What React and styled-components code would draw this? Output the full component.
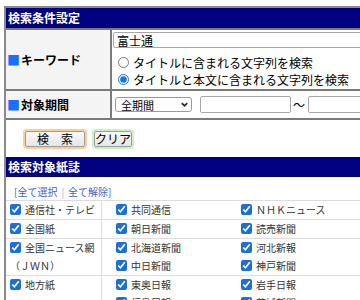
import React from 'react'
import styled, { createGlobalStyle } from 'styled-components'

const GlobalStyle = createGlobalStyle`
  html, body {
    margin: 0;
    padding: 0;
    overflow: hidden;
    background: #fff;
  }
  body {
    font-family: "Noto Sans CJK JP", "Noto Sans", sans-serif;
    color: #000;
  }
`

const categories = [
  { name: '通信社・テレビ', papers: ['共同通信', 'ＮＨＫニュース', 'テレビ朝日'] },
  { name: '全国紙', papers: ['朝日新聞', '読売新聞', '毎日新聞'] },
  {
    name: '全国ニュース網',
    sub: '（ＪＷＮ）',
    papers: ['北海道新聞', '河北新報', '東京新聞', '中日新聞', '神戸新聞', '京都新聞'],
  },
  { name: '地方紙', papers: ['東奥日報', '岩手日報', '秋田魁新報', '福島民報', '茨城新聞', '下野新聞'] },
]

const App = () => {
  return (
    <>
      <GlobalStyle />
      <Page>
        <Panel>
          <SectionHead>検索条件設定</SectionHead>
          <FormRow>
            <LabelCell>
              <Mark>■</Mark>キーワード
            </LabelCell>
            <FieldCell>
              <KeywordInput defaultValue="富士通" />
              <RadioLine>
                <Radio type="radio" name="scope" />
                タイトルに含まれる文字列を検索
              </RadioLine>
              <RadioLine>
                <Radio type="radio" name="scope" defaultChecked />
                タイトルと本文に含まれる文字列を検索
              </RadioLine>
            </FieldCell>
          </FormRow>
          <FormRow>
            <LabelCell>
              <Mark>■</Mark>対象期間
            </LabelCell>
            <FieldCell $inline>
              <SelectWrap>
                <PeriodSelect defaultValue="all">
                  <option value="all">全期間</option>
                </PeriodSelect>
                <Chevron viewBox="0 0 10 10">
                  <path d="M2 3.5 L5 6.5 L8 3.5" fill="none" stroke="#222" strokeWidth="1.8" />
                </Chevron>
              </SelectWrap>
              <DateInput $gap={8} />
              <Tilde>〜</Tilde>
              <DateInput $gap={3} />
            </FieldCell>
          </FormRow>
          <ButtonRow>
            <Button $ring="#ffcc99" $wide>検　索</Button>
            <Button $ring="#ccf0cc">クリア</Button>
          </ButtonRow>
          <SectionHead>検索対象紙誌</SectionHead>
          <LinkRow>
            [<a href="#">全て選択</a>
            <Sep>|</Sep>
            <a href="#">全て解除</a>]
          </LinkRow>
          <PaperTable>
            {categories.map((cat) => (
              <CatRow key={cat.name}>
                <CatCell>
                  <Check type="checkbox" defaultChecked />
                  {cat.name}
                  {cat.sub && (
                    <>
                      <br />
                      {cat.sub}
                    </>
                  )}
                </CatCell>
                <PaperGrid>
                  {cat.papers.map((p) => (
                    <PaperItem key={p}>
                      <Check type="checkbox" defaultChecked />
                      {p}
                    </PaperItem>
                  ))}
                </PaperGrid>
              </CatRow>
            ))}
          </PaperTable>
        </Panel>
      </Page>
    </>
  )
}

export default App

const Page = styled.div`
  padding: 6px 0 0 4px;
  width: 700px;
`

const Panel = styled.div`
  border-left: 2px solid #8a8a8a;
  border-top: 2px solid #8a8a8a;
  background: #fff;
`

const SectionHead = styled.div`
  background: #000080;
  color: #fff;
  font-size: 12px;
  font-weight: bold;
  height: 20px;
  line-height: 20px;
  padding-left: 2px;
`

const FormRow = styled.div`
  display: grid;
  grid-template-columns: 106px 1fr;
  border-top: 2px solid #7a7a7a;
`

const LabelCell = styled.div`
  background: #f4f4f4;
  border-right: 2px solid #7a7a7a;
  display: flex;
  align-items: center;
  font-size: 12px;
  font-weight: bold;
  padding-left: 1px;
`

const Mark = styled.span`
  color: #1a6fff;
  font-weight: normal;
  font-size: 13px;
  margin-right: 1px;
`

const FieldCell = styled.div`
  display: flex;
  flex-direction: ${(p) => (p.$inline ? 'row' : 'column')};
  align-items: ${(p) => (p.$inline ? 'center' : 'stretch')};
  padding: ${(p) => (p.$inline ? '5px 0 5px 3px' : '2px 0 1px 1px')};
`

const KeywordInput = styled.input`
  font-family: inherit;
  font-size: 12px;
  height: 16px;
  box-sizing: border-box;
  border: 1px solid #a8a8a8;
  border-radius: 2px;
  padding: 0 3px;
  width: 100%;
  outline: none;
`

const RadioLine = styled.label`
  display: flex;
  align-items: center;
  font-size: 12px;
  line-height: 17px;
  &:first-of-type {
    margin-top: 6px;
  }
`

const Radio = styled.input`
  width: 11px;
  height: 11px;
  margin: 0 4px 0 5px;
  accent-color: #1a73e8;
`

const SelectWrap = styled.div`
  position: relative;
  width: 77px;
  height: 15px;
`

const PeriodSelect = styled.select`
  appearance: none;
  display: block;
  width: 100%;
  height: 100%;
  box-sizing: border-box;
  border: 1px solid #9a9a9a;
  border-radius: 3px;
  background: #fff;
  font-family: inherit;
  font-size: 11px;
  padding: 0 0 0 5px;
  line-height: 12px;
  color: #000;
`

const Chevron = styled.svg`
  position: absolute;
  right: 3px;
  top: 3px;
  width: 9px;
  height: 9px;
  pointer-events: none;
`

const DateInput = styled.input`
  width: 91px;
  height: 17px;
  box-sizing: border-box;
  border: 1px solid #a8a8a8;
  border-radius: 2px;
  margin-left: ${(p) => p.$gap}px;
  outline: none;
`

const Tilde = styled.span`
  font-size: 12px;
  line-height: 17px;
  margin-left: 2px;
`

const ButtonRow = styled.div`
  display: flex;
  align-items: center;
  gap: 9px;
  height: 37px;
  padding-left: 19px;
  border-top: 2px solid #7a7a7a;
`

const Button = styled.button`
  font-family: inherit;
  font-size: 12px;
  height: 16px;
  line-height: 14px;
  padding: 0;
  width: ${(p) => (p.$wide ? '60px' : '38px')};
  background: linear-gradient(#fafafa, #e6e6e6);
  border: 1px solid #9c9c9c;
  border-radius: 2px;
  box-shadow: 0 0 0 2px ${(p) => p.$ring};
  color: #000;
`

const LinkRow = styled.div`
  font-size: 10px;
  line-height: 18px;
  padding: 6px 0 0 8px;
  height: 17px;
  color: #3a64c8;
  a {
    color: #3a64c8;
    text-decoration: none;
  }
`

const Sep = styled.span`
  color: #9fb0d8;
  margin: 0 4px;
`

const PaperTable = styled.div`
  font-size: 10px;
  color: #333;
`

const CatRow = styled.div`
  display: flex;
  border-top: 1px solid #dcdcdc;
`

const CatCell = styled.div`
  width: 91px;
  flex: none;
  padding-left: 4px;
  line-height: 18px;
  white-space: nowrap;
  border-right: 1px solid #dcdcdc;
`

const PaperGrid = styled.div`
  display: grid;
  grid-template-columns: 125px 120px 118px;
  padding-left: 14px;
`

const PaperItem = styled.div`
  line-height: 18px;
  white-space: nowrap;
`

const Check = styled.input`
  width: 11px;
  height: 11px;
  margin: 0 4px 0 0;
  vertical-align: -1px;
  accent-color: #1a6fd8;
`
